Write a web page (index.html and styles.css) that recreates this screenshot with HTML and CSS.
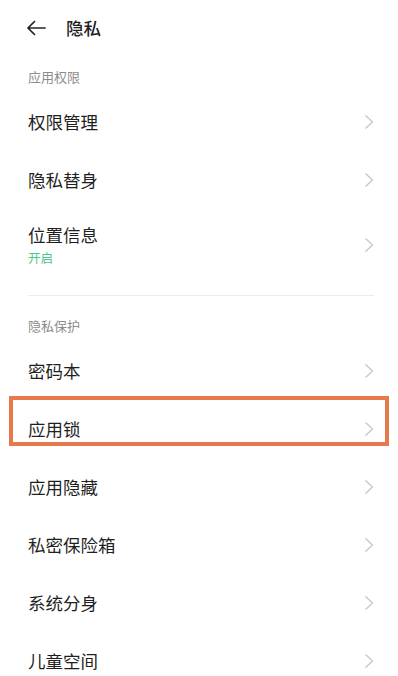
FILE: index.html
```html
<!DOCTYPE html>
<html lang="zh-CN">
<head>
<meta charset="utf-8">
<title>隐私</title>
<link rel="stylesheet" href="styles.css">
</head>
<body>
<div class="page">
  <header class="topbar">
    <svg class="back" width="20" height="16" viewBox="0 0 20 16" aria-hidden="true">
      <path d="M19 8 H2 M8.5 1.5 L2 8 L8.5 14.5" fill="none" stroke="#222" stroke-width="1.7" stroke-linecap="round" stroke-linejoin="round"/>
    </svg>
    <h1 class="title">隐私</h1>
  </header>

  <div class="section-title">应用权限</div>
  <div class="row"><span class="label">权限管理</span><svg class="chev" width="10" height="16" viewBox="0 0 10 16"><path d="M1.5 1.5 L8.5 8 L1.5 14.5" fill="none" stroke="#c6c6c6" stroke-width="1.3"/></svg></div>
  <div class="row"><span class="label">隐私替身</span><svg class="chev" width="10" height="16" viewBox="0 0 10 16"><path d="M1.5 1.5 L8.5 8 L1.5 14.5" fill="none" stroke="#c6c6c6" stroke-width="1.3"/></svg></div>
  <div class="row row-two">
    <div class="texts"><span class="label">位置信息</span><span class="sub">开启</span></div>
    <svg class="chev" width="10" height="16" viewBox="0 0 10 16"><path d="M1.5 1.5 L8.5 8 L1.5 14.5" fill="none" stroke="#c6c6c6" stroke-width="1.3"/></svg>
  </div>

  <div class="divider"></div>

  <div class="section-title">隐私保护</div>
  <div class="row"><span class="label">密码本</span><svg class="chev" width="10" height="16" viewBox="0 0 10 16"><path d="M1.5 1.5 L8.5 8 L1.5 14.5" fill="none" stroke="#c6c6c6" stroke-width="1.3"/></svg></div>
  <div class="row highlighted"><span class="label">应用锁</span><svg class="chev" width="10" height="16" viewBox="0 0 10 16"><path d="M1.5 1.5 L8.5 8 L1.5 14.5" fill="none" stroke="#c6c6c6" stroke-width="1.3"/></svg><span class="mark"></span></div>
  <div class="row"><span class="label">应用隐藏</span><svg class="chev" width="10" height="16" viewBox="0 0 10 16"><path d="M1.5 1.5 L8.5 8 L1.5 14.5" fill="none" stroke="#c6c6c6" stroke-width="1.3"/></svg></div>
  <div class="row"><span class="label">私密保险箱</span><svg class="chev" width="10" height="16" viewBox="0 0 10 16"><path d="M1.5 1.5 L8.5 8 L1.5 14.5" fill="none" stroke="#c6c6c6" stroke-width="1.3"/></svg></div>
  <div class="row"><span class="label">系统分身</span><svg class="chev" width="10" height="16" viewBox="0 0 10 16"><path d="M1.5 1.5 L8.5 8 L1.5 14.5" fill="none" stroke="#c6c6c6" stroke-width="1.3"/></svg></div>
  <div class="row"><span class="label">儿童空间</span><svg class="chev" width="10" height="16" viewBox="0 0 10 16"><path d="M1.5 1.5 L8.5 8 L1.5 14.5" fill="none" stroke="#c6c6c6" stroke-width="1.3"/></svg></div>
</div>
</body>
</html>
```

FILE: styles.css
```css
* { box-sizing: border-box; }
html, body {
  margin: 0;
  padding: 0;
  background: #ffffff;
}
body {
  font-family: "Noto Sans CJK SC", "Noto Sans", sans-serif;
  color: #1f1f1f;
  overflow: hidden;
}
.page {
  width: 398px;
  height: 676px;
  overflow: hidden;
}
.topbar {
  height: 56px;
  display: flex;
  align-items: center;
  padding-left: 26px;
}
.back {
  display: block;
  flex: none;
}
.title {
  margin: 0 0 0 20px;
  font-size: 17.5px;
  font-weight: 500;
  line-height: 24px;
  color: #1f1f1f;
}
.section-title {
  padding: 12px 28px 7px;
  font-size: 13px;
  line-height: 18px;
  color: #8c8c8c;
}
.row {
  position: relative;
  height: 58px;
  display: flex;
  align-items: center;
  justify-content: space-between;
  padding: 0 24px 0 28px;
}
.label {
  font-size: 17.5px;
  line-height: 24px;
  color: #1f1f1f;
}
.chev {
  display: block;
  flex: none;
}
.row-two {
  height: auto;
  padding-top: 14px;
  padding-bottom: 14px;
}
.texts {
  display: flex;
  flex-direction: column;
}
.sub {
  margin-top: 2px;
  font-size: 12.5px;
  line-height: 18px;
  color: #4cc58e;
}
.divider {
  height: 1px;
  margin: 14px 24px 9px 28px;
  background: #ececec;
}
.mark {
  position: absolute;
  left: 9px;
  right: 9px;
  top: -4px;
  height: 50px;
  border: 4px solid #e8794c;
  pointer-events: none;
}
```
